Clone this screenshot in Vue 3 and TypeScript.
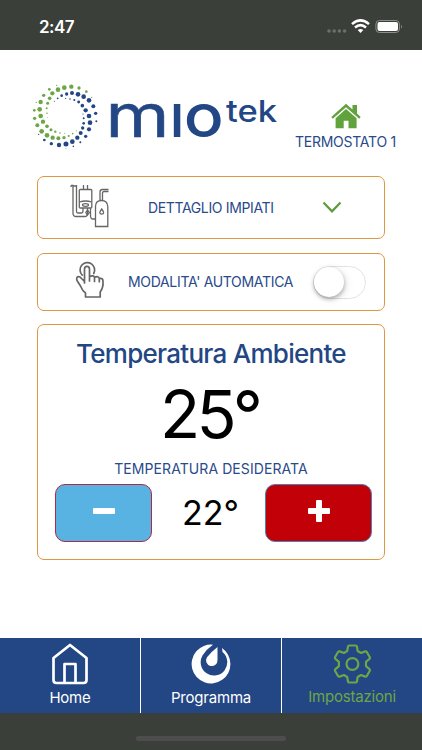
<script setup lang="ts">
import { ref } from 'vue'

type Dot = [number, number, number]

const greenDots: Dot[] = [
  [95, 31, 2], [73, 43, 4], [56, 61, 5], [34, 82, 2], [28, 106, 4], [29, 130, 5], [37, 151, 6],
  [50, 169, 7], [66, 181, 7], [83, 188, 6.5], [100, 190, 6], [117, 188, 5], [131, 183, 3.2],
  [143, 176, 2.4], [154, 167, 1.5], [118, 38, 7], [139, 35, 6.5], [162, 39, 5], [184, 50, 4],
  [200, 67, 2], [99, 44, 7], [82, 55, 6.5], [47, 81, 6.5], [44, 103, 7], [47, 123, 7],
  [54, 140, 6.5], [66, 154, 5.5], [78, 164, 4.5], [91, 170, 3.5], [105, 174, 2.4], [119, 175, 1.5],
  [74, 70, 5.5], [68, 85, 4.5], [65, 100, 3], [66, 115, 2.2], [67, 128, 1.2],
]
const blueDots: Dot[] = [
  [141, 54, 6], [159, 58, 7], [176, 65, 7], [192, 76, 7], [205, 94, 6], [212, 115, 5], [214, 139, 3],
  [125, 57, 5], [110, 62, 4], [98, 70, 2.6], [88, 79, 1.6], [122, 70, 1.8], [135, 72, 2.4],
  [148, 75, 3.2], [161, 81, 4.4], [172, 92, 5.5], [182, 106, 6.5], [192, 123, 7], [195, 143, 7],
  [192, 163, 6.2], [182, 184, 5], [166, 202, 3], [174, 117, 1.8], [176, 130, 3], [176, 145, 4],
  [173, 159, 5], [167, 174, 6], [157, 188, 6.5], [142, 200, 7], [123, 207, 7.5], [102, 210, 6.5],
  [79, 206, 5], [58, 195, 4], [41, 178, 2], [145, 214, 2.4], [123, 220, 1.2],
]

const automatic = ref(false)
const ambient = ref(25)
const target = ref(22)
</script>

<template>
  <div class="screen">
    <header class="status">
      <span class="clock">2:47</span>
      <svg class="indicators" width="78" height="20" viewBox="0 0 78 20">
        <g fill="#6b706a">
          <circle cx="3" cy="13" r="1.8" /><circle cx="8.200" cy="13" r="1.8" />
          <circle cx="13.400" cy="13" r="1.8" /><circle cx="18.600" cy="13" r="1.8" />
        </g>
        <g fill="none" stroke="#fff" stroke-width="2.500">
          <path d="M26 6.100Q34.500 -1.300 43 6.100" />
          <path d="M29 9.500Q34.500 4.700 40 9.500" />
        </g>
        <path d="M31.700 12.100Q34.500 9.800 37.300 12.100L34.500 14.900Z" fill="#fff" />
        <rect x="49.900" y="2.500" width="23.500" height="12" rx="3.500" fill="none" stroke="#899087" />
        <rect x="51.500" y="4" width="20.500" height="9" rx="2" fill="#fff" />
        <path d="M75 6.500q1.800 2 0 4z" fill="#899087" />
      </svg>
    </header>

    <main class="content">
      <div class="brand">
        <svg class="logo" width="255" height="80" viewBox="0 0 255 80">
          <g transform="scale(.33333)">
            <circle v-for="(d, i) in greenDots" :key="'g' + i" :cx="d[0]" :cy="d[1]" :r="d[2]" fill="#6ca646" />
            <circle v-for="(d, i) in blueDots" :key="'b' + i" :cx="d[0]" :cy="d[1]" :r="d[2]" fill="#234684" />
          </g>
          <g class="wordmark">
            <text class="wide" x="80.500" y="61.800" font-size="60" textLength="64" lengthAdjust="spacingAndGlyphs">m</text>
            <text x="144.500" y="61.800" font-size="60">ı</text>
            <text x="158.800" y="61.800" font-size="60" textLength="40" lengthAdjust="spacingAndGlyphs">o</text>
            <text x="201" y="47" font-size="30" textLength="51" lengthAdjust="spacingAndGlyphs">tek</text>
          </g>
        </svg>
        <div class="device">
          <svg width="30" height="26" viewBox="0 0 30 26">
            <path fill="#60a33c" d="M15 .8L21.500 6.600V2H26V10.600L29.700 14 28.200 15.700 15 4.300 1.800 15.700.3 14Z" />
            <path fill="#60a33c" d="M15 6L25.600 15.200V25.300H17.500V17.700H12.700V25.300H4.600V15.200Z" />
          </svg>
          <span class="device-name">TERMOSTATO 1</span>
        </div>
      </div>

      <section class="card details">
        <svg class="boiler" width="40" height="46" viewBox="0 0 40 46" fill="none" stroke="#666" stroke-width="1.300">
          <path d="M1 1.500H3V29Q3 32.500 6 32.500H15Q17.500 32.500 17.500 29V24M1 1.500V3M6.500 1V27.500Q6.500 29 8 29H11.500Q13 29 13 27V24M3 2H7" />
          <rect x="9.300" y="5.500" width="12.500" height="18.500" rx="1" />
          <path d="M13.500 1V5M17.500 1V5M9.500 18Q15.500 16 21.700 18M17.500 26L15.800 28.500 17.500 31 19.200 28.500ZM20.500 24V31.500Q20.500 35 23 35H25" />
          <ellipse cx="15.500" cy="21" rx="3" ry="1.300" />
          <path d="M25.500 42.500V22.500Q25.500 16.500 31.500 16.500T37.800 22.500V42.500ZM30 16V8Q30 5.500 32.500 5.500H38.500M32.500 16V9Q32.500 7.500 34 7.500H38.500M31.700 25Q35.500 30 31.700 30.200 28 30 31.700 25Z" />
        </svg>
        <span class="label details-label">DETTAGLIO IMPIATI</span>
        <svg class="chevron" width="20" height="14" viewBox="0 0 20 14">
          <path d="M1.500 1.500L10 10.300 18.500 1.500" fill="none" stroke="#5c9c3c" stroke-width="2.200" />
        </svg>
      </section>

      <section class="card mode">
        <svg class="hand" width="32" height="38" viewBox="0 0 32 38" fill="none" stroke="#666" stroke-width="1.700" stroke-linejoin="round" stroke-linecap="round">
          <path d="M7.200 14.100A7.300 7.300 0 1 1 18.700 12.500" />
          <path d="M9.500 22V8.300Q9.500 5.400 12 5.400T14.500 8.300V15.500Q19 14 19.500 16.300 23.500 14.500 24.300 17.500 28 16.500 28 20.500 28.500 26.500 25.200 31V36H10.500V32Q7.500 30 5.500 25L2 19.500Q.9 16 3.500 15.700 5 15.600 6.500 17.500L9.500 20.500M14.500 15.500V20M19.500 16.500V20.500M24.300 17.500V20.700" />
        </svg>
        <span class="label mode-label">MODALITA' AUTOMATICA</span>
        <button class="switch" :class="{ on: automatic }" role="switch" :aria-checked="automatic" @click="automatic = !automatic">
          <span class="knob"></span>
        </button>
      </section>

      <section class="card climate">
        <h1>Temperatura Ambiente</h1>
        <p class="ambient">{{ ambient }}°</p>
        <p class="label target-label">TEMPERATURA DESIDERATA</p>
        <div class="controls">
          <button class="step minus" @click="target--">
            <svg width="24" height="24" viewBox="0 0 24 24"><rect x="1" y="9" width="22" height="6" rx="1" fill="#fff" /></svg>
          </button>
          <span class="target">{{ target }}°</span>
          <button class="step plus" @click="target++">
            <svg width="24" height="24" viewBox="0 0 24 24" fill="#fff"><rect x="1" y="9" width="22" height="6" rx="1" /><rect x="9" y="1" width="6" height="22" rx="1" /></svg>
          </button>
        </div>
      </section>
    </main>

    <nav class="tabs">
      <a class="tab">
        <svg width="40" height="42" viewBox="0 0 40 42" fill="none" stroke="#fff" stroke-width="2.700" stroke-linejoin="round">
          <path d="M20 2L36.500 15V37Q36.500 40 33.500 40H6.500Q3.500 40 3.500 37V15ZM14.500 40V21H25.500V40" />
        </svg>
        <span class="home">Home</span>
      </a>
      <a class="tab">
        <svg width="40" height="42" viewBox="0 0 40 42" fill="#fff">
          <path d="M22 1.700A19.400 19.400 0 1 0 31 5L31.500 9A13.300 13.300 0 1 1 11.500 12.500Q15.500 6 22 1.700Z" />
          <path d="M26.500 4V17A5.700 5.700 0 1 1 16 14.300Q20 9 26.500 4Z" />
        </svg>
        <span class="program">Programma</span>
      </a>
      <a class="tab active">
        <svg width="40" height="42" viewBox="0 0 40 42" fill="none" stroke="#6ca646" stroke-width="2.200" stroke-linejoin="round">
          <path d="M16 3.500Q16.200 2.500 17.300 2.500H23.500Q24.700 2.500 24.900 3.500L25.700 8 29 10 33.300 8.400Q34.200 8.100 34.800 9L37.800 14.200Q38.300 15.200 37.500 15.900L34 18.900V23.100L37.500 26.100Q38.300 26.800 37.800 27.800L34.800 33Q34.200 33.900 33.300 33.600L29 32 25.700 34 24.900 38.500Q24.700 39.500 23.500 39.500H17.300Q16.200 39.500 16 38.500L15.200 34 11.900 32 7.600 33.600Q6.600 33.900 6 33L3 27.800Q2.600 26.800 3.400 26.100L6.900 23.100V18.900L3.400 15.900Q2.600 15.200 3 14.200L6 9Q6.600 8.100 7.600 8.400L11.900 10 15.200 8Z" />
          <circle cx="20.400" cy="21" r="5.900" />
        </svg>
        <span class="settings">Impostazioni</span>
      </a>
    </nav>
    <footer class="bottom"><span class="indicator"></span></footer>
  </div>
</template>

<style>
body { margin: 0; background: #fff; }
</style>

<style scoped>
* { box-sizing: border-box; }
.screen { width: 422px; height: 750px; display: flex; flex-direction: column; overflow: hidden; background: #fff; font-family: Inter, "Liberation Sans", sans-serif; }
.status { height: 50px; flex: none; display: flex; align-items: flex-start; justify-content: space-between; padding: 17px 18px 0 39px; background: #3a4039; color: #fff; }
.clock { font-size: 17px; line-height: 20px; font-weight: 600; letter-spacing: -.55px; }
.indicators { flex: none; margin-top: 1px; }
.content { height: 588px; flex: none; padding: 25px 37px 0; }
.brand { display: flex; height: 101px; margin: 0 -12px; }
.logo { flex: none; overflow: visible; }
.wordmark { fill: #234684; font-weight: 500; }
.wide { font-weight: 400; stroke: #234684; stroke-width: .5px; }
.device { display: flex; flex: none; flex-direction: column; align-items: center; width: 120px; padding-top: 28px; margin-left: 5.500px; }
.device svg { display: block; }
.device-name { font-size: 14px; line-height: 18px; margin-top: 4px; color: #294a8b; white-space: nowrap; letter-spacing: -.25px; }
.card { width: 348px; border: 1.500px solid #df9640; border-radius: 7px; }
.label { color: #294a8b; font-size: 14px; line-height: 18px; white-space: nowrap; }
.details { height: 63px; display: flex; align-items: center; padding-left: 32px; }
.boiler { flex: none; margin-top: -2px; }
.details-label { width: 127px; margin-left: 38px; letter-spacing: -.36px; }
.chevron { margin-left: 47px; }
.mode { height: 58px; margin-top: 14px; display: flex; align-items: center; padding-left: 37px; }
.hand { flex: none; margin-top: -4px; }
.mode-label { width: 165px; margin-left: 21px; letter-spacing: -.32px; }
.switch { width: 53px; height: 33px; flex: none; margin-left: 20px; padding: 0; border: 1.500px solid #e3e3e3; border-radius: 17px; background: #fff; display: flex; align-items: center; }
.switch.on { justify-content: flex-end; background: #6ca646; }
.knob { width: 30px; height: 30px; border-radius: 50%; background: #fff; box-shadow: 0 2px 4px rgba(0, 0, 0, .3), 2px 2px 9px rgba(0, 0, 0, .1); }
.climate { height: 236px; margin-top: 13px; display: flex; flex-direction: column; align-items: center; padding-top: 12px; }
h1 { margin: 0; font-size: 26px; line-height: 34px; font-weight: 500; color: #234684; white-space: nowrap; letter-spacing: -.73px; }
.ambient { margin: 3px 0 0; padding-right: 3px; font-size: 66px; line-height: 80px; color: #000; letter-spacing: -3.800px; }
.target-label { margin: 6px 0 0; letter-spacing: .08px; }
.controls { width: 317px; margin: 6px 0 0 5px; display: flex; justify-content: space-between; align-items: center; }
.step { height: 58px; padding: 0 0 4px; display: flex; align-items: center; justify-content: center; border-radius: 10px; }
.minus { width: 97px; background: #58b2e2; border: 1px solid #b02a45; }
.plus { width: 107px; background: #c20008; border: 1px solid #4a83b5; }
.target { font-size: 34px; line-height: 40px; color: #000; padding-left: 4px; }
.tabs { height: 75px; flex: none; display: grid; grid-template-columns: 141px 141px 140px; background: #234684; }
.tab { display: flex; flex-direction: column; align-items: center; padding-top: 5px; color: #fff; border-right: 1px solid #fff; }
.tab:last-child { border: 0; }
.tab svg { flex: none; }
.tab span { font-size: 15px; line-height: 20px; margin-top: 3px; letter-spacing: -.2px; }
.tab.active { color: #6ca646; }
.tab.active span { margin-top: 2px; }
.bottom { height: 37px; flex: none; background: #3a4039; display: flex; justify-content: center; align-items: flex-start; padding-top: 23px; }
.indicator { width: 150px; height: 5px; border-radius: 3px; background: #4d4d4d; }
</style>
